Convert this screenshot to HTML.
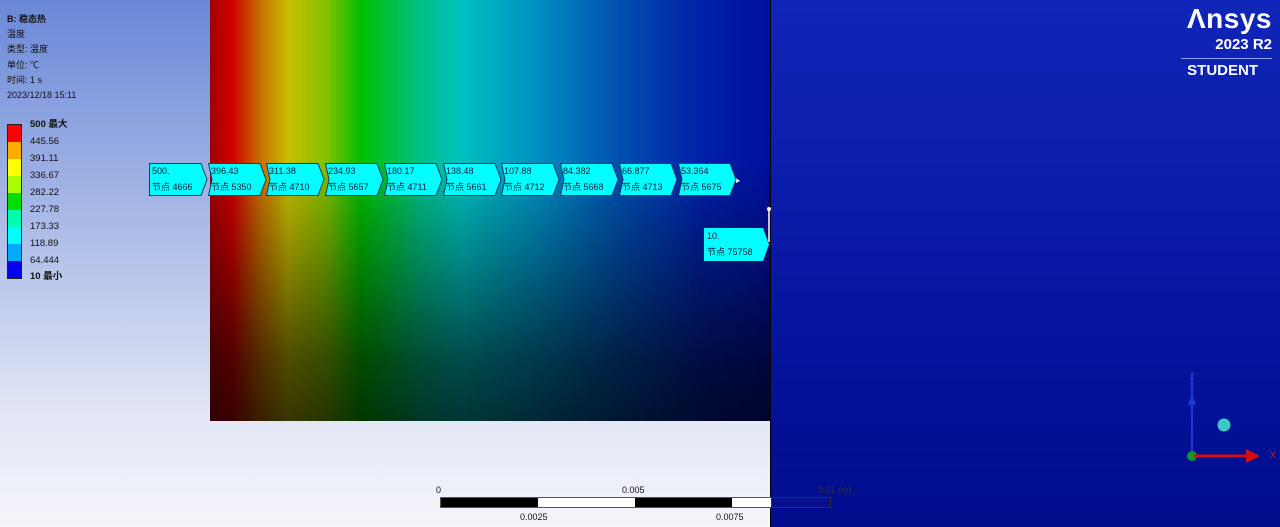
<!DOCTYPE html>
<html><head><meta charset="utf-8"><style>
*{margin:0;padding:0;box-sizing:border-box}
body{width:1280px;height:527px;overflow:hidden;position:relative;font-family:"Liberation Sans","Noto Sans CJK SC",sans-serif;background:linear-gradient(180deg,#6a88d8 0%,#a7b8e6 40%,#e4e8f6 80%,#f4f5fb 100%)}
.info{position:absolute;left:7px;top:12px;font-size:9px;line-height:15.2px;color:#111;white-space:nowrap}
.leg{position:absolute;left:7px;top:124px}
.sw{width:15px;height:17px;border-left:1px solid #222;border-right:1px solid #222}
.lt{position:absolute;left:23px;font-size:9.5px;line-height:11px;color:#111;white-space:nowrap}
.contour{position:absolute;left:210px;top:0;width:560px;height:421px;background:linear-gradient(90deg,#a00000 0%,#d00000 4%,#c87000 9%,#c8c000 14%,#80c000 21%,#00c000 27%,#00c08a 38%,#00c0c0 45%,#0090c0 58%,#0050b0 73%,#0020a8 88%,#0010a0 100%)}
.shade{position:absolute;left:0;top:0;width:100%;height:100%;background:linear-gradient(180deg,rgba(0,0,0,0) 0%,rgba(0,0,0,0) 38%,rgba(0,0,0,.3) 62%,rgba(0,0,0,.6) 85%,rgba(0,0,0,.72) 100%)}
.right{position:absolute;left:770px;top:0;width:510px;height:527px;background:linear-gradient(180deg,#1026b8 0%,#0818a4 50%,#000c8c 100%);border-left:1px solid #000}
.lab{position:absolute;font-size:9px;color:#0a1a3a;line-height:16px;white-space:nowrap}
.lab svg{position:absolute;left:0;top:0}
.lab span{position:relative;display:block;padding-left:3px}
.logo{position:absolute;right:8px;top:2px;color:#fff;text-align:right;font-weight:bold}
</style></head><body>
<div class="info">
<div style="font-weight:bold">B: 稳态热</div><div>温度</div><div>类型: 温度</div><div>单位: ℃</div><div>时间: 1 s</div><div>2023/12/18 15:11</div>
</div>
<div class="leg">
<div style="border-top:1px solid #222;border-bottom:1px solid #222;width:15px">
<div class="sw" style="background:#ff0000"></div><div class="sw" style="background:#ffaa00"></div><div class="sw" style="background:#ffff00"></div><div class="sw" style="background:#aaff00"></div><div class="sw" style="background:#00dd00"></div><div class="sw" style="background:#00ffaa"></div><div class="sw" style="background:#00ffff"></div><div class="sw" style="background:#00aaff"></div><div class="sw" style="background:#0000ee"></div>
</div>
<div class="lt" style="top:-5px;font-weight:bold">500 最大</div>
<div class="lt" style="top:12px">445.56</div><div class="lt" style="top:29px">391.11</div><div class="lt" style="top:46px">336.67</div><div class="lt" style="top:63px">282.22</div><div class="lt" style="top:80px">227.78</div><div class="lt" style="top:97px">173.33</div><div class="lt" style="top:114px">118.89</div><div class="lt" style="top:131px">64.444</div>
<div class="lt" style="top:147px;font-weight:bold">10 最小</div>
</div>
<div class="contour"><div class="shade"></div></div>
<div class="right"></div>
<svg style="position:absolute;left:0;top:0" width="1280" height="527">
<line x1="769" y1="210" x2="769" y2="242" stroke="#fff" stroke-width="1.5"/><circle cx="769" cy="209" r="2" fill="#fff"/>
<path d="M736 178 l4 3 l-4 2z" fill="#fff"/>
</svg>
<div class="lab" style="left:149px;top:163px;width:59px;height:33px"><svg width="59" height="33"><path d="M0.5 0.5H52L58 16.5L52 32.5H0.5Z" fill="#0ff" stroke="#1a3a6a"/></svg><span>500.<br>节点 4666</span></div>
<div class="lab" style="left:208px;top:163px;width:59px;height:33px"><svg width="59" height="33"><path d="M0.5 0.5H52L58 16.5L52 32.5H0.5L4 16.5Z" fill="#0ff" stroke="#1a3a6a"/></svg><span>396.43<br>节点 5350</span></div>
<div class="lab" style="left:266px;top:163px;width:59px;height:33px"><svg width="59" height="33"><path d="M0.5 0.5H52L58 16.5L52 32.5H0.5L4 16.5Z" fill="#0ff" stroke="#1a3a6a"/></svg><span>311.38<br>节点 4710</span></div>
<div class="lab" style="left:325px;top:163px;width:59px;height:33px"><svg width="59" height="33"><path d="M0.5 0.5H52L58 16.5L52 32.5H0.5L4 16.5Z" fill="#0ff" stroke="#1a3a6a"/></svg><span>234.93<br>节点 5657</span></div>
<div class="lab" style="left:384px;top:163px;width:59px;height:33px"><svg width="59" height="33"><path d="M0.5 0.5H52L58 16.5L52 32.5H0.5L4 16.5Z" fill="#0ff" stroke="#1a3a6a"/></svg><span>180.17<br>节点 4711</span></div>
<div class="lab" style="left:443px;top:163px;width:59px;height:33px"><svg width="59" height="33"><path d="M0.5 0.5H52L58 16.5L52 32.5H0.5L4 16.5Z" fill="#0ff" stroke="#1a3a6a"/></svg><span>138.48<br>节点 5661</span></div>
<div class="lab" style="left:501px;top:163px;width:59px;height:33px"><svg width="59" height="33"><path d="M0.5 0.5H52L58 16.5L52 32.5H0.5L4 16.5Z" fill="#0ff" stroke="#1a3a6a"/></svg><span>107.88<br>节点 4712</span></div>
<div class="lab" style="left:560px;top:163px;width:59px;height:33px"><svg width="59" height="33"><path d="M0.5 0.5H52L58 16.5L52 32.5H0.5L4 16.5Z" fill="#0ff" stroke="#1a3a6a"/></svg><span>84.382<br>节点 5668</span></div>
<div class="lab" style="left:619px;top:163px;width:59px;height:33px"><svg width="59" height="33"><path d="M0.5 0.5H52L58 16.5L52 32.5H0.5L4 16.5Z" fill="#0ff" stroke="#1a3a6a"/></svg><span>66.877<br>节点 4713</span></div>
<div class="lab" style="left:678px;top:163px;width:59px;height:33px"><svg width="59" height="33"><path d="M0.5 0.5H52L58 16.5L52 32.5H0.5L4 16.5Z" fill="#0ff" stroke="#1a3a6a"/></svg><span>53.364<br>节点 5675</span></div>
<div class="lab" style="left:704px;top:228px;width:65px;height:33px"><svg width="65" height="33"><path d="M0 0H59L65 16.5L59 33H0Z" fill="#0ff"/></svg><span>10.<br>节点 75758</span></div>
<div class="logo"><div style="font-size:28px;line-height:34px;letter-spacing:0.5px">Λnsys</div><div style="font-size:15px;line-height:18px">2023 R2</div><div style="border-top:1px solid #8aa0e8;margin:4px 0 0 -6px;padding-top:3px;font-size:15px;line-height:17px;padding-right:14px">STUDENT</div></div>
<div style="position:absolute;left:436px;top:485px;font-size:9px;color:#111">0</div>
<div style="position:absolute;left:622px;top:485px;font-size:9px;color:#111">0.005</div>
<div style="position:absolute;left:520px;top:512px;font-size:9px;color:#111">0.0025</div>
<div style="position:absolute;left:716px;top:512px;font-size:9px;color:#111">0.0075</div>
<div style="position:absolute;left:440px;top:497px;width:390px;height:11px;border:1px solid #555;background:#fff">
<div style="position:absolute;left:0;top:0;width:97px;height:9px;background:#000"></div>
<div style="position:absolute;left:194px;top:0;width:97px;height:9px;background:#000"></div>
<div style="position:absolute;left:330px;top:-1px;width:60px;height:11px;background:#050f90;border:1px solid #333"></div>
</div>
<div style="position:absolute;left:818px;top:485px;font-size:9px;color:#333">0.01 (m)</div>
<svg style="position:absolute;left:1180px;top:365px" width="100" height="100">
<line x1="12" y1="8" x2="12" y2="92" stroke="#1a3ad8" stroke-width="2"/>
<path d="M8 40 L12 28 L16 40Z" fill="#1a3ad8"/>
<text x="10" y="14" font-size="8" fill="#2a3acc" font-family="Liberation Sans">Z</text>
<circle cx="12" cy="91" r="5" fill="#0a9a2a"/>
<line x1="14" y1="91" x2="68" y2="91" stroke="#d01010" stroke-width="3"/>
<path d="M66 84 L80 91 L66 98Z" fill="#d01010"/>
<text x="90" y="93" font-size="9" fill="#c02020" font-family="Liberation Sans">X</text>
<circle cx="44" cy="60" r="6.5" fill="#3ac8c0"/>
</svg>
</body></html>
